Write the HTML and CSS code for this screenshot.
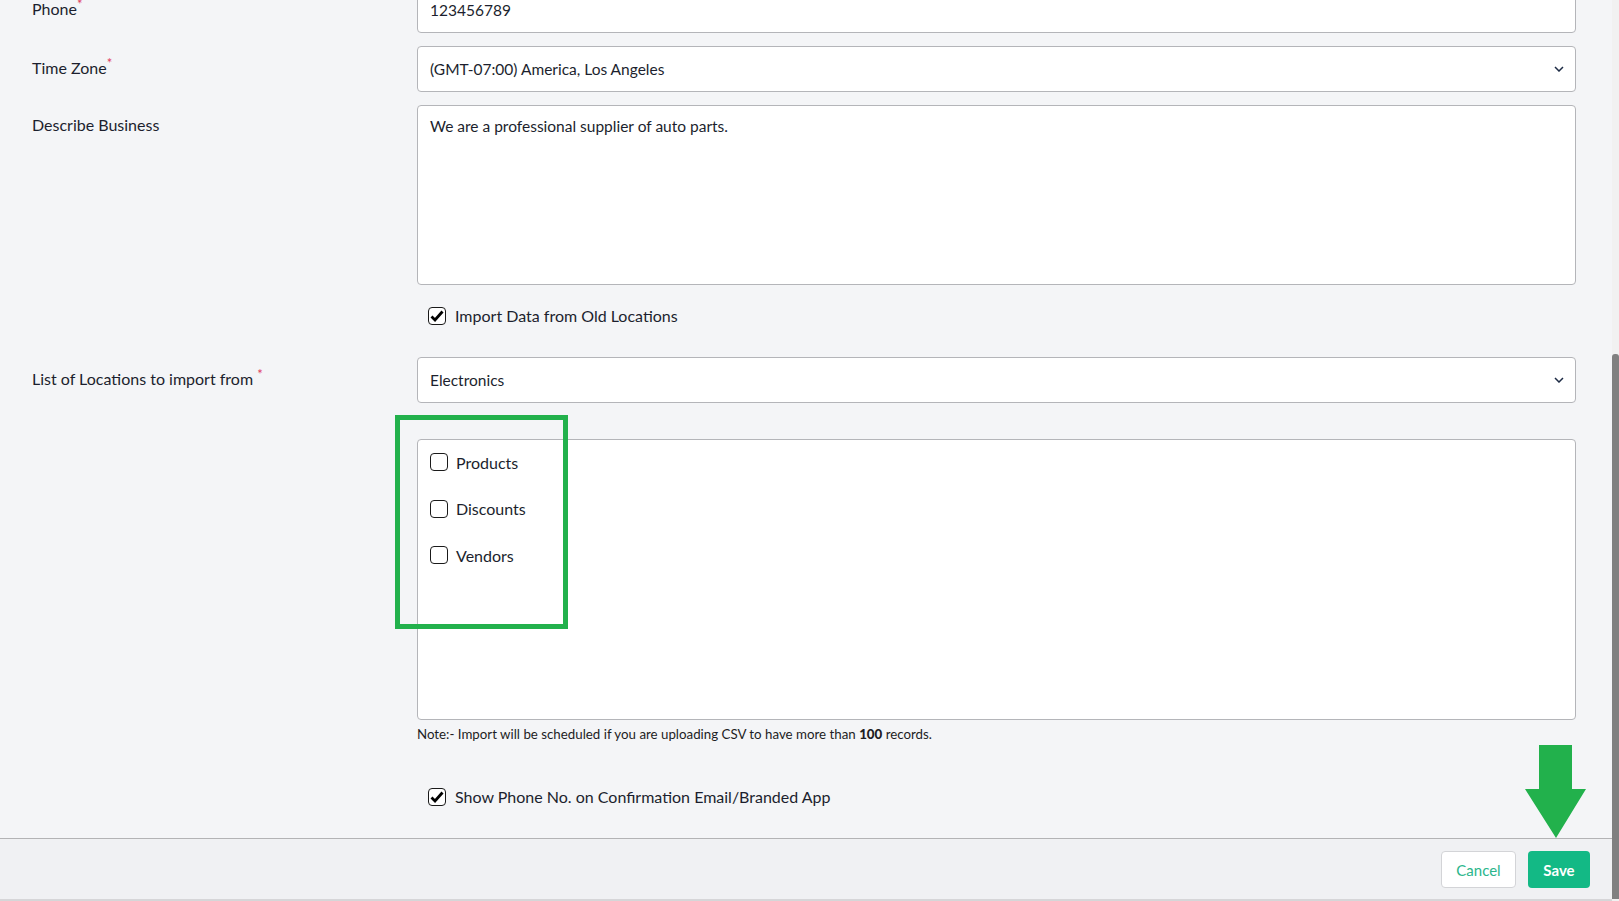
FILE: index.html
```html
<!DOCTYPE html>
<html>
<head>
<meta charset="utf-8">
<title>Location Settings</title>
<link rel="stylesheet" href="styles.css">
</head>
<body>
<div class="page">
  <div class="main">
    <div class="scroll_area">
      <form class="loc_form">
        <div class="form_row row_phone">
          <label class="field_label">Phone<span class="req">*</span></label>
          <div class="field_box input_box">123456789</div>
        </div>
        <div class="form_row row_tz">
          <label class="field_label">Time Zone<span class="req">*</span></label>
          <div class="field_box input_box select_box">
            <span>(GMT-07:00) America, Los Angeles</span>
            <svg class="chev" width="10" height="6" viewBox="0 0 10 6"><path d="M1 1l4 4 4-4" fill="none" stroke="#1d2b45" stroke-width="1.5"/></svg>
          </div>
        </div>
        <div class="form_row row_desc">
          <label class="field_label">Describe Business</label>
          <div class="field_box text_box">We are a professional supplier of auto parts.</div>
        </div>
        <div class="form_row row_import">
          <div class="field_label"></div>
          <label class="check_line">
            <span class="cbox checked"><svg width="14" height="12" viewBox="0 0 14 12"><path d="M1.5 6.5l3.5 3.5 7.5-8.5" fill="none" stroke="#000" stroke-width="2.8"/></svg></span>
            Import Data from Old Locations
          </label>
        </div>
        <div class="form_row row_loc">
          <label class="field_label">List of Locations to import from <span class="req">*</span></label>
          <div class="field_box input_box select_box">
            <span>Electronics</span>
            <svg class="chev" width="10" height="6" viewBox="0 0 10 6"><path d="M1 1l4 4 4-4" fill="none" stroke="#1d2b45" stroke-width="1.5"/></svg>
          </div>
        </div>
        <div class="form_row row_types">
          <div class="field_label"></div>
          <div class="field_box list_box">
            <label class="list_item"><span class="cbox"></span>Products</label>
            <label class="list_item"><span class="cbox"></span>Discounts</label>
            <label class="list_item"><span class="cbox"></span>Vendors</label>
          </div>
        </div>
        <div class="form_row row_note">
          <div class="field_label"></div>
          <p class="note">Note:- Import will be scheduled if you are uploading CSV to have more than <b>100</b> records.</p>
        </div>
        <div class="form_row row_show">
          <div class="field_label"></div>
          <label class="check_line">
            <span class="cbox checked"><svg width="14" height="12" viewBox="0 0 14 12"><path d="M1.5 6.5l3.5 3.5 7.5-8.5" fill="none" stroke="#000" stroke-width="2.8"/></svg></span>
            Show Phone No. on Confirmation Email/Branded App
          </label>
        </div>
      </form>
    </div>
    <div class="footer">
      <button type="button" class="btn btn_cancel">Cancel</button>
      <button type="button" class="btn btn_save">Save</button>
    </div>
  </div>
  <div class="scrollbar"><div class="thumb"></div></div>
</div>

<!-- annotation marks drawn over the page -->
<div class="mark_box"></div>
<svg class="mark_arrow" width="61" height="93" viewBox="0 0 61 93"><path d="M14 0H47V44H61L31 93L0 44H14Z" fill="#22b14c"/></svg>
</body>
</html>
```

FILE: styles.css
```css
html, body {
	margin: 0;
	padding: 0;
	height: 100%;
	overflow: hidden;
}
body {
	background: #f4f5f7;
	font-family: "Lato", "Liberation Sans", sans-serif;
	color: #1c1f2e;
}
.page {
	display: flex;
	height: 901px;
}
.main {
	width: 1612px;
	display: flex;
	flex-direction: column;
}
.scroll_area {
	height: 838px;
	flex-shrink: 0;
	overflow: hidden;
}
.loc_form {
	display: flex;
	flex-direction: column;
	padding-left: 32px;
	margin-top: -13px;
}
.form_row {
	display: flex;
}
.field_label {
	width: 385px;
	flex-shrink: 0;
	font-size: 16px;
	line-height: 20px;
	padding-top: 7px;
}
.row_desc .field_label {
	padding-top: 10px;
}
.req {
	color: #e0405e;
	font-size: 13px;
	vertical-align: 6px;
}
.field_box {
	width: 1159px;
	box-sizing: border-box;
	background: #fff;
	border: 1px solid #b4b5b9;
	border-radius: 4px;
	font-size: 15.5px;
}
.input_box {
	height: 46px;
	padding: 0 12px;
	display: flex;
	align-items: center;
}
.select_box {
	justify-content: space-between;
	padding-right: 11px;
}
.text_box {
	height: 180px;
	padding: 10px 12px;
	line-height: 20px;
}
.row_tz, .row_desc {
	margin-top: 13px;
}
.row_import {
	margin-top: 22px;
}
.check_line {
	display: flex;
	align-items: center;
	gap: 9px;
	font-size: 16px;
	line-height: 18px;
	padding-left: 11px;
}
.cbox {
	width: 18px;
	height: 18px;
	box-sizing: border-box;
	border: 1.6px solid #1a1a1a;
	border-radius: 4px;
	background: #fff;
	display: flex;
	align-items: center;
	justify-content: center;
	flex-shrink: 0;
}
.cbox svg {
	margin-top: -1px;
}
.row_loc {
	margin-top: 32px;
}
.row_types {
	margin-top: 36px;
}
.list_box {
	height: 281px;
	padding: 10px 12px;
}
.list_item {
	display: flex;
	align-items: center;
	gap: 8px;
	font-size: 16px;
	height: 24px;
	margin-bottom: 22.5px;
}
.row_note {
	margin-top: 6px;
}
.note {
	margin: 0;
	font-size: 13.3px;
	line-height: 16px;
	color: #1d1d24;
}
.note b {
	font-weight: 900;
}
.row_show {
	margin-top: 46px;
}
.footer {
	height: 63px;
	box-sizing: border-box;
	border-top: 1px solid #b3b3b5;
	border-bottom: 2px solid #d6d6d8;
	background: #f0f1f3;
	display: flex;
	justify-content: flex-end;
	align-items: flex-start;
	gap: 12px;
	padding: 12px 22px 0 0;
}
.btn {
	height: 37px;
	border-radius: 4px;
	font-family: "Lato", "Liberation Sans", sans-serif;
	font-size: 15px;
	padding: 0;
	cursor: pointer;
}
.btn_cancel {
	width: 75px;
	background: #fff;
	border: 1px solid #d3d4d7;
	color: #2bb68c;
}
.btn_save {
	width: 62px;
	background: #13b985;
	border: none;
	color: #fff;
	font-weight: bold;
}
.scrollbar {
	width: 7px;
	background: #f1f1f1;
}
.thumb {
	margin-top: 354px;
	height: 545px;
	background: #808080;
	border-radius: 3px 3px 0 0;
}
.mark_box {
	position: absolute;
	left: 395px;
	top: 415px;
	width: 163px;
	height: 204px;
	border: 5px solid #22b14c;
}
.mark_arrow {
	position: absolute;
	left: 1525px;
	top: 745px;
}
```
